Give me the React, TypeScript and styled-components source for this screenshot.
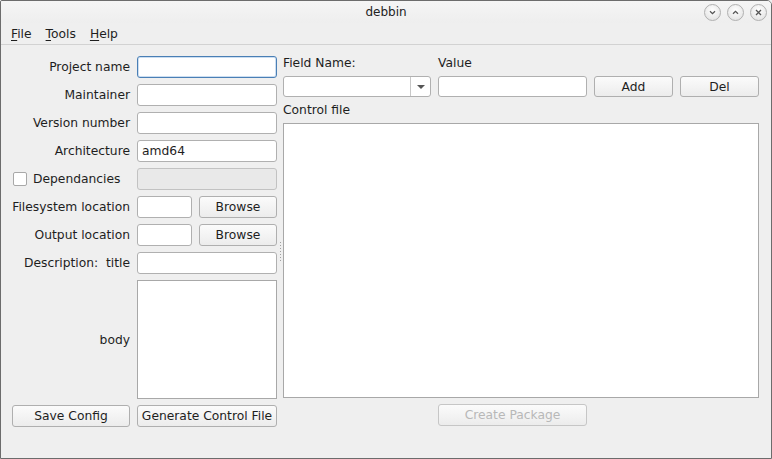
import React from 'react';
import styled, { createGlobalStyle } from 'styled-components';

const GlobalStyle = createGlobalStyle`
  html, body {
    margin: 0;
    padding: 0;
    background: #efefef;
  }
  * {
    box-sizing: border-box;
  }
`;

const FONT_SIZE = '12.3px';

const Window = styled.div`
  width: 772px;
  height: 459px;
  display: flex;
  flex-direction: column;
  background: #efefef;
  border: 1px solid #6c6c6c;
  border-top-right-radius: 5px;
  border-top-left-radius: 2px;
  overflow: hidden;
  font-family: 'DejaVu Sans', 'Liberation Sans', sans-serif;
  font-size: ${FONT_SIZE};
  color: #1e1e1e;
`;

const TitleBar = styled.div`
  height: 22px;
  flex: none;
  display: flex;
  align-items: center;
  justify-content: center;
  position: relative;
  background: linear-gradient(#f5f5f5, #eeeeee);
  font-size: 12px;
  color: #222;
`;

const WindowButtons = styled.div`
  position: absolute;
  right: 4px;
  top: 3px;
  display: flex;
  gap: 6px;
`;

const RoundButton = styled.div`
  width: 17px;
  height: 17px;
  border-radius: 50%;
  border: 1px solid #b0b0b0;
  background: radial-gradient(circle at 50% 35%, #ffffff, #dedede);
  display: flex;
  align-items: center;
  justify-content: center;
`;

const MenuBar = styled.div`
  height: 22px;
  flex: none;
  display: flex;
  align-items: center;
  padding-left: 10px;
  border-bottom: 1px solid #d2d2d2;
  font-size: ${FONT_SIZE};
`;

const MenuItem = styled.span`
  margin-right: 14px;
  & u {
    text-decoration: underline;
    text-underline-offset: 2px;
  }
`;

const Body = styled.div`
  flex: 1;
  display: flex;
  padding: 10px 11px 0 11px;
`;

const LeftPanel = styled.div`
  display: grid;
  grid-template-columns: 118px 140px;
  grid-template-rows: repeat(8, 22px) 119px 22px;
  column-gap: 7px;
  row-gap: 6px;
  padding-top: 1px;
`;

const Label = styled.div<{ $align?: 'left' | 'right' }>`
  display: flex;
  align-items: center;
  justify-content: ${p => (p.$align === 'left' ? 'flex-start' : 'flex-end')};
  white-space: nowrap;
`;

const CheckLabel = styled.label`
  display: flex;
  align-items: center;
  gap: 6px;
  white-space: nowrap;
  margin-left: 1px;
`;

const CheckBox = styled.span`
  width: 14px;
  height: 14px;
  background: #fff;
  border: 1px solid #a8a8a8;
  border-radius: 2px;
`;

const Input = styled.div<{ $focused?: boolean; $disabled?: boolean; $width?: number }>`
  height: 100%;
  width: ${p => (p.$width ? `${p.$width}px` : '100%')};
  background: ${p => (p.$disabled ? '#e9e9e9' : '#ffffff')};
  border: 1px solid ${p => (p.$focused ? '#4a7fb5' : p.$disabled ? '#c2c2c2' : '#b0b0b0')};
  box-shadow: ${p => (p.$focused ? 'inset 0 0 0 1px rgba(110,160,215,0.35)' : 'none')};
  border-radius: 3px;
  display: flex;
  align-items: center;
  padding-left: 4px;
`;

const SplitRow = styled.div`
  display: flex;
  gap: 7px;
`;

const Button = styled.div<{ $disabled?: boolean; $width?: number }>`
  height: 100%;
  width: ${p => (p.$width ? `${p.$width}px` : '100%')};
  display: flex;
  align-items: center;
  justify-content: center;
  white-space: nowrap;
  color: ${p => (p.$disabled ? '#b8b8b8' : '#1e1e1e')};
  background: linear-gradient(#fbfbfb, #ececec);
  border: 1px solid ${p => (p.$disabled ? '#c6c6c6' : '#afafaf')};
  border-radius: 3px;
`;

const Splitter = styled.div`
  width: 5px;
  flex: none;
  margin-left: 1px;
  display: flex;
  flex-direction: column;
  justify-content: center;
  align-items: center;
  gap: 2px;
  padding-bottom: 10px;
`;

const Dot = styled.span`
  width: 1px;
  height: 1px;
  background: #a0a0a0;
`;

const RightPanel = styled.div`
  width: 476px;
  display: flex;
  flex-direction: column;
`;

const FieldGrid = styled.div`
  display: grid;
  grid-template-columns: 148px 149px 79px 79px;
  grid-template-rows: 18px 21px;
  column-gap: 7px;
  row-gap: 4px;
  margin-top: -1px;
`;

const Combo = styled.div`
  height: 100%;
  background: #fff;
  border: 1px solid #b0b0b0;
  border-radius: 3px;
  display: flex;
  justify-content: flex-end;
`;

const ComboArrow = styled.div`
  width: 20px;
  border-left: 1px solid #c8c8c8;
  display: flex;
  align-items: center;
  justify-content: center;
  &::after {
    content: '';
    border-left: 4px solid transparent;
    border-right: 4px solid transparent;
    border-top: 4px solid #555;
  }
`;

const SectionLabel = styled.div`
  height: 18px;
  margin-top: 4px;
  display: flex;
  align-items: center;
`;

const TextArea = styled.div<{ $height: number }>`
  height: ${p => p.$height}px;
  background: #fff;
  border: 1px solid #a8a8a8;
  margin-top: 4px;
`;

const BottomRow = styled.div`
  display: flex;
  height: 22px;
  margin-top: 6px;
  padding-left: 155px;
`;

const BodyField = styled.div`
  background: #fff;
  border: 1px solid #a8a8a8;
`;

const Chevron: React.FC<{ kind: 'down' | 'up' | 'close' }> = ({ kind }) => (
  <svg width="9" height="9" viewBox="0 0 9 9">
    {kind === 'down' && <path d="M2 3.2 L4.5 5.7 L7 3.2" fill="none" stroke="#555" strokeWidth="1.3" />}
    {kind === 'up' && <path d="M2 5.8 L4.5 3.3 L7 5.8" fill="none" stroke="#555" strokeWidth="1.3" />}
    {kind === 'close' && <path d="M2 2 L7 7 M7 2 L2 7" fill="none" stroke="#555" strokeWidth="1.3" />}
  </svg>
);

const App: React.FC = () => {
  return (
    <>
      <GlobalStyle />
      <Window>
        <TitleBar>
          debbin
          <WindowButtons>
            <RoundButton><Chevron kind="down" /></RoundButton>
            <RoundButton><Chevron kind="up" /></RoundButton>
            <RoundButton><Chevron kind="close" /></RoundButton>
          </WindowButtons>
        </TitleBar>

        <MenuBar>
          <MenuItem><u>F</u>ile</MenuItem>
          <MenuItem><u>T</u>ools</MenuItem>
          <MenuItem><u>H</u>elp</MenuItem>
        </MenuBar>

        <Body>
          <LeftPanel>
            <Label>Project name</Label>
            <Input $focused />

            <Label>Maintainer</Label>
            <Input />

            <Label>Version number</Label>
            <Input />

            <Label>Architecture</Label>
            <Input>amd64</Input>

            <CheckLabel>
              <CheckBox />
              Dependancies
            </CheckLabel>
            <Input $disabled />

            <Label>Filesystem location</Label>
            <SplitRow>
              <Input $width={55} />
              <Button $width={78}>Browse</Button>
            </SplitRow>

            <Label>Output location</Label>
            <SplitRow>
              <Input $width={55} />
              <Button $width={78}>Browse</Button>
            </SplitRow>

            <Label>Description:&nbsp;&nbsp;title</Label>
            <Input />

            <Label>body</Label>
            <BodyField />

            <Button>Save Config</Button>
            <Button>Generate Control File</Button>
          </LeftPanel>

          <Splitter>
            {Array.from({ length: 7 }).map((_, i) => (
              <Dot key={i} />
            ))}
          </Splitter>

          <RightPanel>
            <FieldGrid>
              <Label $align="left">Field Name:</Label>
              <Label $align="left">Value</Label>
              <span />
              <span />
              <Combo>
                <ComboArrow />
              </Combo>
              <Input />
              <Button>Add</Button>
              <Button>Del</Button>
            </FieldGrid>
            <SectionLabel>Control file</SectionLabel>
            <TextArea $height={275} />
            <BottomRow>
              <Button $disabled $width={149}>Create Package</Button>
            </BottomRow>
          </RightPanel>
        </Body>
      </Window>
    </>
  );
};

export default App;
